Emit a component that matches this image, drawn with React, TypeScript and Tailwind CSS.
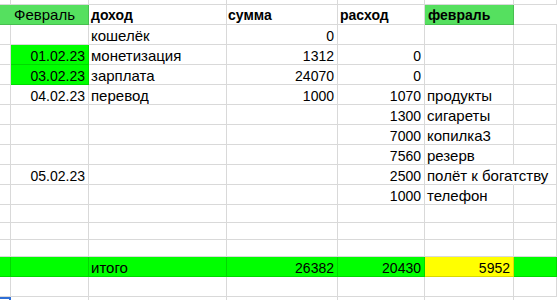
import React from "react";

type Cell = {
  t?: string;
  r?: boolean;
  b?: boolean;
  bg?: "hdr" | "lime" | "yellow";
  noR?: boolean;
};

const colW = [
  "w-[11px]",
  "w-[78px]",
  "w-[138px]",
  "w-[111px]",
  "w-[87px]",
  "w-[89px]",
  "flex-1",
];

const bgCls = (bg?: Cell["bg"]) =>
  bg === "hdr"
    ? "bg-[#55e05f]"
    : bg === "lime"
    ? "bg-[#00ff00]"
    : bg === "yellow"
    ? "bg-[#ffff00]"
    : "bg-white";

function Row({
  h,
  cells,
  children,
}: {
  h: string;
  cells?: Cell[];
  children?: React.ReactNode;
}) {
  const list: Cell[] = cells ?? [];
  return (
    <div className={`flex ${h}`}>
      {children
        ? children
        : colW.map((w, i) => {
            const c = list[i] ?? {};
            return (
              <div
                key={i}
                className={`${w} shrink-0 h-full border-b border-r ${
                  c.noR ? "border-r-transparent" : "border-r-black/15"
                } border-b-black/15 ${bgCls(c.bg)} flex ${
                  c.r
                    ? "justify-end pr-[3px] text-[14px]"
                    : "justify-start pl-[2px] text-[15px]"
                } pt-[3px] whitespace-nowrap ${
                  c.b ? "font-bold" : "font-normal"
                } relative ${c.noR ? "z-10" : "z-0"}`}
              >
                {c.t ? <span>{c.t}</span> : null}
              </div>
            );
          })}
    </div>
  );
}

export default function App() {
  const E: Cell = {};
  return (
    <div className="w-[557px] h-[300px] overflow-hidden bg-white text-black font-['Liberation_Sans',Arial,sans-serif] text-[14px] leading-[16px]">
      <Row h="h-[5px]" />
      {/* header row */}
      <Row h="h-[20px]">
        <div className="w-[89px] shrink-0 h-full border-b border-r border-b-black/15 border-r-black/15 bg-[#55e05f] flex pl-[14px] pt-[2px] text-[15px]">
          <span>Февраль</span>
        </div>
        <div className="w-[138px] shrink-0 h-full border-b border-r border-black/15 flex pl-[2px] pt-[2px] font-bold">
          <span>доход</span>
        </div>
        <div className="w-[111px] shrink-0 h-full border-b border-r border-black/15 flex pl-[1px] pt-[2px] font-bold">
          <span>сумма</span>
        </div>
        <div className="w-[87px] shrink-0 h-full border-b border-r border-black/15 flex pl-[2px] pt-[2px] font-bold">
          <span>расход</span>
        </div>
        <div className="w-[89px] shrink-0 h-full border-b border-r border-black/15 bg-[#55e05f] flex pl-[3px] pt-[2px] font-bold">
          <span>февраль</span>
        </div>
        <div className="flex-1 h-full border-b border-black/15" />
      </Row>
      <Row h="h-[20px]" cells={[E, E, { t: "кошелёк" }, { t: "0", r: true }]} />
      <Row
        h="h-[20px]"
        cells={[
          E,
          { t: "01.02.23", r: true, bg: "lime" },
          { t: "монетизация" },
          { t: "1312", r: true },
          { t: "0", r: true },
        ]}
      />
      <Row
        h="h-[20px]"
        cells={[
          E,
          { t: "03.02.23", r: true, bg: "lime" },
          { t: "зарплата" },
          { t: "24070", r: true },
          { t: "0", r: true },
        ]}
      />
      <Row
        h="h-[20px]"
        cells={[
          E,
          { t: "04.02.23", r: true },
          { t: "перевод" },
          { t: "1000", r: true },
          { t: "1070", r: true },
          { t: "продукты" },
        ]}
      />
      <Row h="h-[20px]" cells={[E, E, E, E, { t: "1300", r: true }, { t: "сигареты" }]} />
      <Row h="h-[20px]" cells={[E, E, E, E, { t: "7000", r: true }, { t: "копилка3" }]} />
      <Row h="h-[20px]" cells={[E, E, E, E, { t: "7560", r: true }, { t: "резерв" }]} />
      <Row
        h="h-[20px]"
        cells={[
          E,
          { t: "05.02.23", r: true },
          E,
          E,
          { t: "2500", r: true },
          { t: "полёт к богатству", noR: true },
        ]}
      />
      <Row h="h-[20px]" cells={[E, E, E, E, { t: "1000", r: true }, { t: "телефон" }]} />
      <Row h="h-[18px]" />
      <Row h="h-[17px]" />
      <Row h="h-[17px]" />
      <Row
        h="h-[20px]"
        cells={[
          { bg: "lime" },
          { bg: "lime" },
          { t: "итого", bg: "lime" },
          { t: "26382", r: true, bg: "lime" },
          { t: "20430", r: true, bg: "lime" },
          { t: "5952", r: true, bg: "yellow" },
          { bg: "lime" },
        ]}
      />
      <Row h="h-[20px]" />
      <div className="flex h-[10px]">
        <div className="w-[11px] shrink-0 h-full border-t-2 border-r-2 border-[#2f6fd6]" />
        <div className="w-[78px] shrink-0 h-full border-r border-black/15" />
        <div className="w-[138px] shrink-0 h-full border-r border-black/15" />
        <div className="w-[111px] shrink-0 h-full border-r border-black/15" />
        <div className="w-[87px] shrink-0 h-full border-r border-black/15" />
        <div className="w-[89px] shrink-0 h-full border-r border-black/15" />
        <div className="flex-1 h-full" />
      </div>
    </div>
  );
}
